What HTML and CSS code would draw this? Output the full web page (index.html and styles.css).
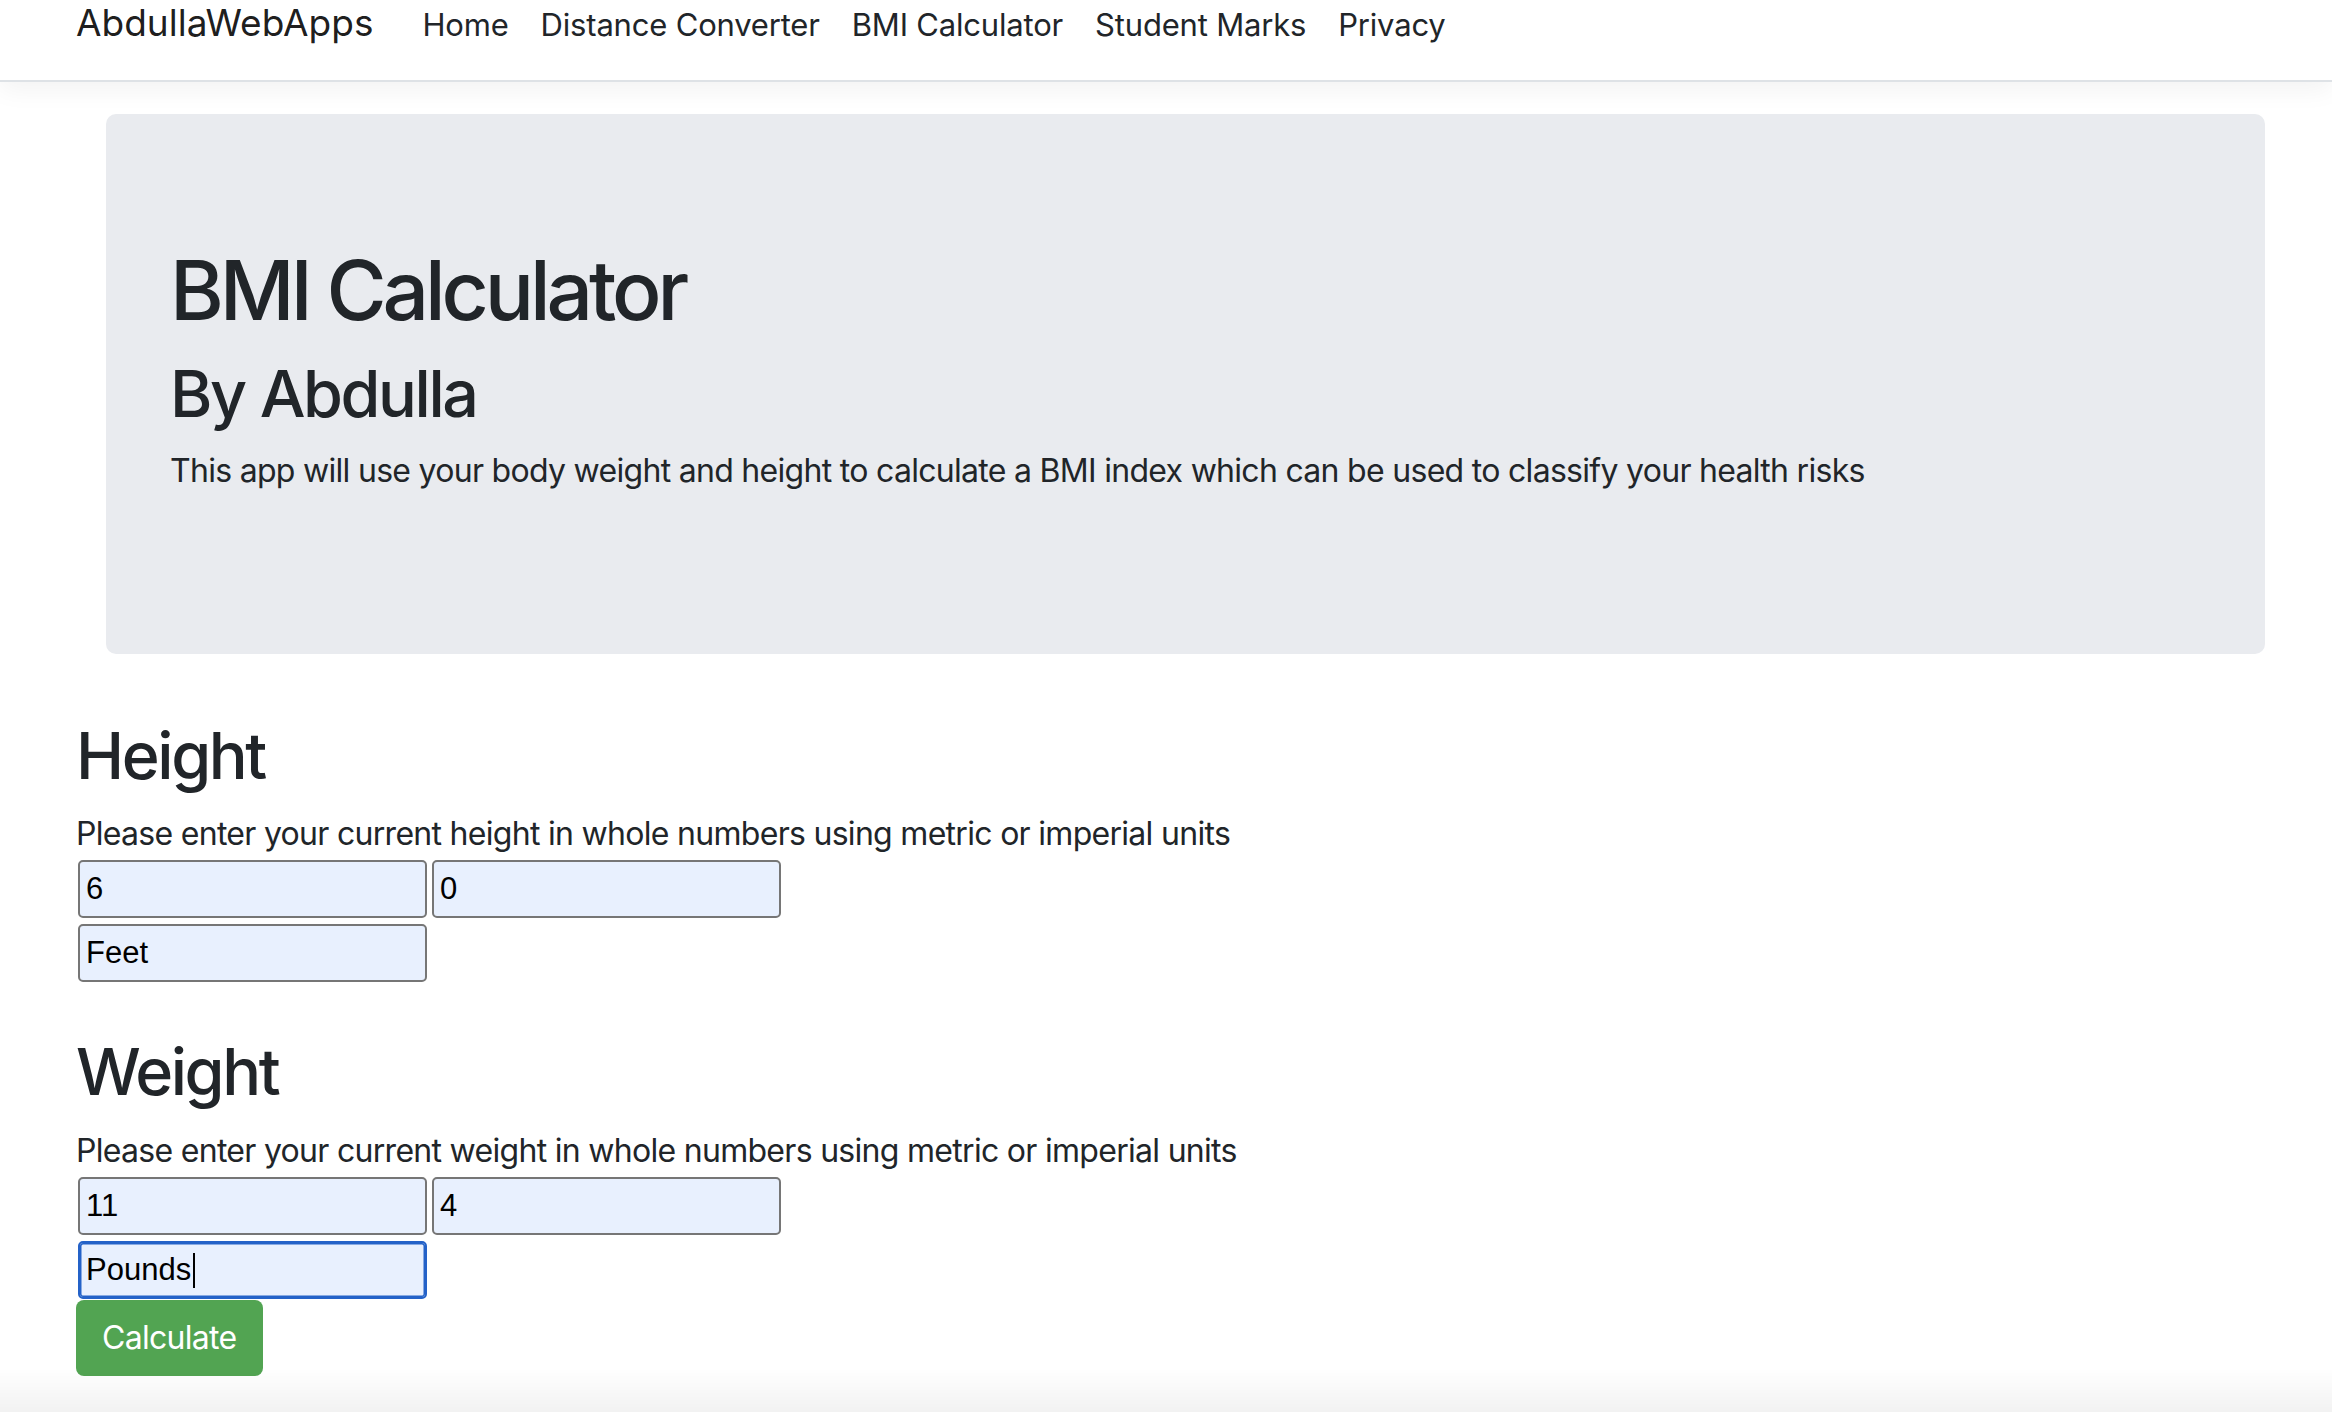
FILE: index.html
```html
<!DOCTYPE html>
<html lang="en">
<head>
<meta charset="utf-8">
<title>BMI Calculator - AbdullaWebApps</title>
<link rel="stylesheet" href="styles.css">
</head>
<body>
<header class="navbar">
  <div class="nav-inner">
    <a class="brand" href="#">AbdullaWebApps</a>
    <ul class="nav-links">
      <li><a class="nav-link" href="#">Home</a></li>
      <li><a class="nav-link" href="#">Distance Converter</a></li>
      <li><a class="nav-link" href="#">BMI Calculator</a></li>
      <li><a class="nav-link" href="#">Student Marks</a></li>
      <li><a class="nav-link" href="#">Privacy</a></li>
    </ul>
  </div>
</header>
<main class="page">
  <section class="jumbotron">
    <h1 class="jt-title">BMI Calculator</h1>
    <h2 class="jt-sub">By Abdulla</h2>
    <p class="jt-text">This app will use your body weight and height to calculate a BMI index which can be used to classify your health risks</p>
  </section>

  <section class="measure measure-height">
    <h2 class="section-title">Height</h2>
    <p class="section-hint">Please enter your current height in whole numbers using metric or imperial units</p>
    <div class="input-grid">
      <div class="input-row">
        <input class="field" type="text" value="6">
        <input class="field" type="text" value="0">
      </div>
      <div class="input-row">
        <input class="field" type="text" value="Feet">
      </div>
    </div>
  </section>

  <section class="measure measure-weight">
    <h2 class="section-title">Weight</h2>
    <p class="section-hint">Please enter your current weight in whole numbers using metric or imperial units</p>
    <div class="input-grid">
      <div class="input-row">
        <input class="field" type="text" value="11">
        <input class="field" type="text" value="4">
      </div>
      <div class="input-row">
        <span class="field-wrap">
          <input class="field field-focused" type="text" value="Pounds">
          <span class="caret"></span>
        </span>
      </div>
    </div>
    <button class="btn-calc" type="button">Calculate</button>
  </section>
</main>
<div class="bottom-fade"></div>
</body>
</html>
```

FILE: styles.css
```css
* { box-sizing: border-box; }

html, body {
  margin: 0;
  padding: 0;
  background: #ffffff;
}

body {
  font-family: Inter, "Noto Sans", "Liberation Sans", sans-serif;
  color: #212529;
  overflow: hidden;
}

/* ---------- Navbar ---------- */
.navbar {
  height: 82px;
  border-bottom: 2px solid #dee2e6;
  box-shadow: 0 8px 24px rgba(0, 0, 0, 0.05);
  background: #ffffff;
  position: relative;
  z-index: 1;
}

.nav-inner {
  display: flex;
  align-items: baseline;
  padding-left: 76px;
  padding-top: 1px;
}

.brand {
  font-size: 37px;
  line-height: 44px;
  color: rgba(0, 0, 0, 0.9);
  text-decoration: none;
  margin-right: 33px;
}

.nav-links {
  display: flex;
  list-style: none;
  margin: 0;
  padding: 0;
}

.nav-link {
  display: block;
  font-size: 31px;
  line-height: 44px;
  letter-spacing: -0.006em;
  padding: 0 16px;
  color: #212529;
  text-decoration: none;
}

/* ---------- Page ---------- */
.page {
  padding: 32px 67px 0 76px;
}

.jumbotron {
  margin-left: 30px;
  background: #e9ebef;
  border-radius: 10px;
  padding: 128px 64px 127px 64px;
  margin-bottom: 63px;
}

.jt-title {
  margin: 0 0 15px 0;
  font-size: 82px;
  line-height: 1.2;
  font-weight: 500;
  letter-spacing: -0.05em;
}

.jt-sub {
  margin: 0 0 14px 0;
  font-size: 64.6px;
  line-height: 1.2;
  font-weight: 500;
  letter-spacing: -0.037em;
}

.jt-text {
  margin: 0 0 32px 0;
  font-size: 32px;
  line-height: 48px;
  letter-spacing: -0.022em;
}

/* ---------- Sections ---------- */
.measure-weight {
  margin-top: 51px;
}

.section-title {
  margin: 0 0 16px 0;
  font-size: 64.6px;
  line-height: 1.2;
  font-weight: 500;
  letter-spacing: -0.037em;
}

.section-hint {
  margin: 0 0 2px 0;
  font-size: 32px;
  line-height: 48px;
  letter-spacing: -0.022em;
}

.input-grid {
  display: flex;
  flex-direction: column;
  gap: 6px;
  margin-left: 2px;
}

.input-row {
  display: flex;
  gap: 5px;
}

.field {
  display: block;
  width: 349px;
  height: 58px;
  margin: 0;
  padding: 0 6px;
  border: 2px solid #767676;
  border-radius: 5px;
  background: #e8f0fe;
  font-family: "Liberation Sans", Arial, sans-serif;
  font-size: 31px;
  color: #000000;
  outline: none;
}

.field-wrap {
  position: relative;
  display: block;
}

.field-focused {
  border-color: #2462c8;
  box-shadow: inset 0 0 0 1.5px #2462c8;
}

.caret {
  position: absolute;
  left: 115px;
  top: 12px;
  width: 2px;
  height: 35px;
  background: #000000;
}

.btn-calc {
  display: block;
  margin-top: 1px;
  height: 76px;
  padding: 0 26px;
  border: none;
  border-radius: 8px;
  background: #52a452;
  color: #ffffff;
  font-family: Inter, "Noto Sans", "Liberation Sans", sans-serif;
  font-size: 32px;
  line-height: 48px;
  letter-spacing: -0.022em;
  cursor: pointer;
}

/* ---------- Bottom fade ---------- */
.bottom-fade {
  position: fixed;
  left: 0;
  right: 0;
  bottom: 0;
  height: 44px;
  background: linear-gradient(to bottom, rgba(0, 0, 0, 0), rgba(0, 0, 0, 0.05));
  pointer-events: none;
}
```
